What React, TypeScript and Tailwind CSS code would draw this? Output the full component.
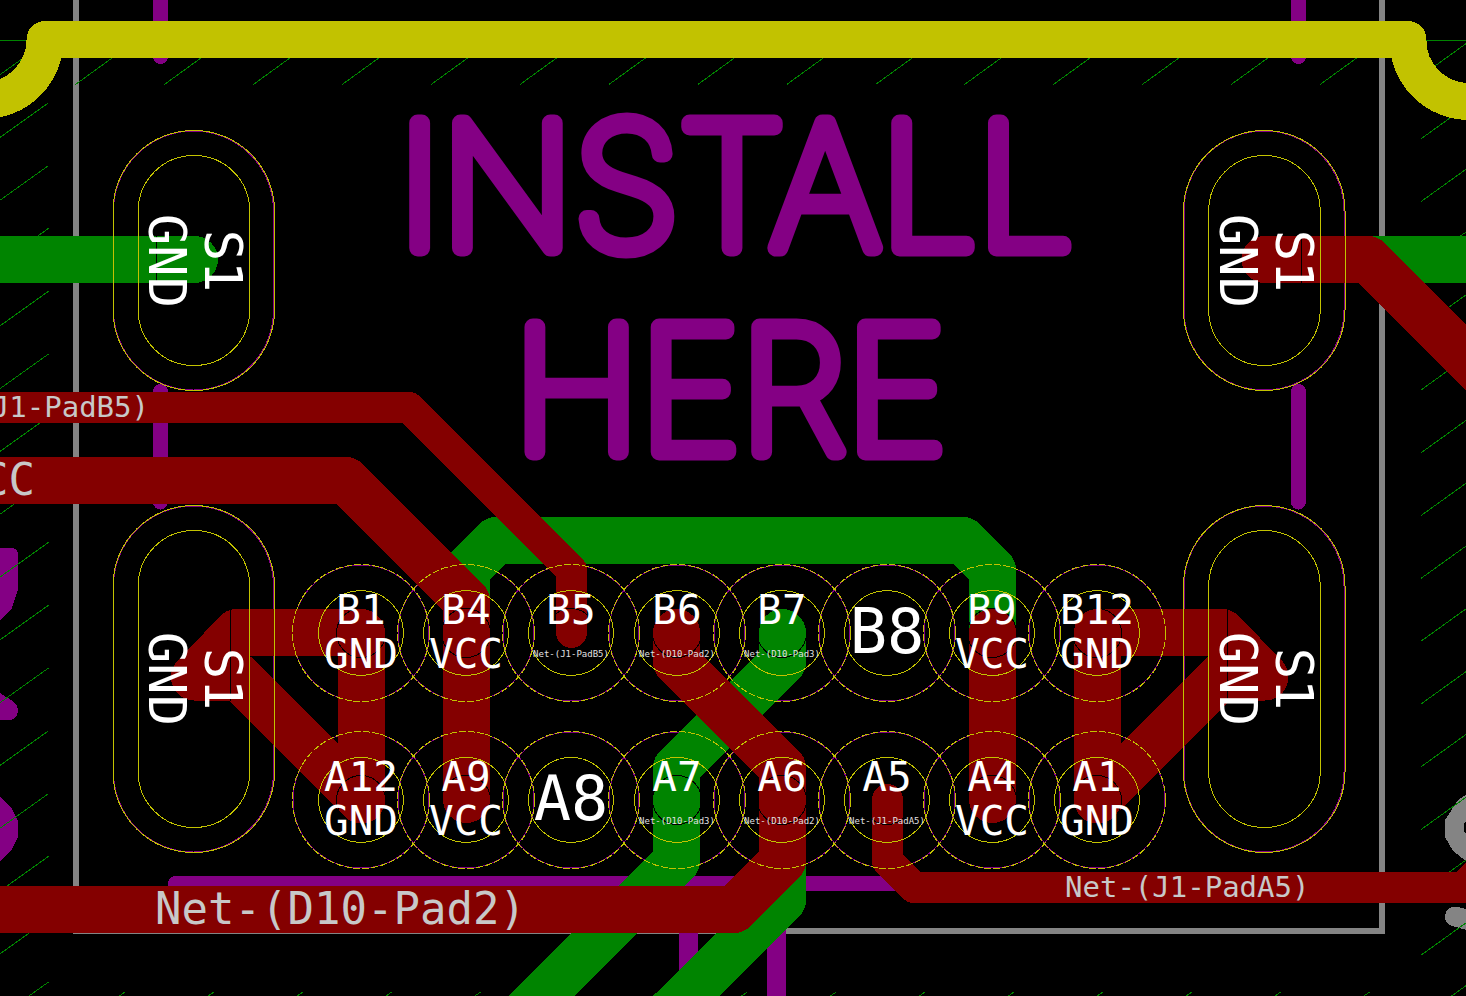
const RED = "#840000";
const GREEN = "#008400";
const PURPLE = "#840084";
const YELLOW = "#c2c200";
const GRAY = "#848484";

type Pad = { x: number; y: number; name: string; net?: string; small?: boolean };

const pads: Pad[] = [
  { x: 361, y: 633, name: "B1", net: "GND" },
  { x: 466, y: 633, name: "B4", net: "VCC" },
  { x: 571, y: 633, name: "B5", net: "Net-(J1-PadB5)", small: true },
  { x: 677, y: 633, name: "B6", net: "Net-(D10-Pad2)", small: true },
  { x: 782, y: 633, name: "B7", net: "Net-(D10-Pad3)", small: true },
  { x: 887, y: 633, name: "B8" },
  { x: 992, y: 633, name: "B9", net: "VCC" },
  { x: 1097, y: 633, name: "B12", net: "GND" },
  { x: 361, y: 800, name: "A12", net: "GND" },
  { x: 466, y: 800, name: "A9", net: "VCC" },
  { x: 571, y: 800, name: "A8" },
  { x: 677, y: 800, name: "A7", net: "Net-(D10-Pad3)", small: true },
  { x: 782, y: 800, name: "A6", net: "Net-(D10-Pad2)", small: true },
  { x: 887, y: 800, name: "A5", net: "Net-(J1-PadA5)", small: true },
  { x: 992, y: 800, name: "A4", net: "VCC" },
  { x: 1097, y: 800, name: "A1", net: "GND" },
];

const slots = [
  { x: 113, y: 130.5, h: 260, mid: 261 },
  { x: 1183.5, y: 130.5, h: 260, mid: 261 },
  { x: 113, y: 505.5, h: 347, mid: 679 },
  { x: 1183.5, y: 505.5, h: 347, mid: 679 },
];

const range = (n: number) => Array.from({ length: n }, (_, i) => i);

const hatch = [
  ...range(16).map((i) => `M48.5 ${40 + i * 62.8}l-49 35`),
  ...range(16).map((i) => `M1421 ${76 + i * 62.8}l48 -34.5`),
  ...range(15).map((i) => `M${75.5 + i * 88.9} 84.5l40 -29`),
  ...range(15).map((i) => `M${125 + i * 88.9} 992l-10 7`),
  "M0 40.5H40",
  "M1420 40.5H1466",
].join("");

const MONO = "font-['DejaVu_Sans_Mono',monospace]";

function Slot({ x, y, h, mid }: (typeof slots)[number]) {
  return (
    <g fill="none" stroke={YELLOW}>
      <rect x={x} y={y} width={161.5} height={h} rx={80.5} />
      <rect x={x + 25.2} y={y + 25} width={111.500} height={h - 50} rx={55.5} />
      <g fill="#fff" stroke="none" textAnchor="middle" className={`${MONO} text-[52px]`}>
        <text transform={`translate(${x + 36} ${mid}) rotate(90)`}>GND</text>
        <text transform={`translate(${x + 92} ${mid}) rotate(90)`}>S1</text>
      </g>
    </g>
  );
}

function PadMark({ x, y, name, net, small }: Pad) {
  return (
    <g>
      <g fill="none" shapeRendering="crispEdges">
        <circle cx={x} cy={y} r={24.5} stroke="#000" />
        <circle cx={x} cy={y} r={42.5} stroke={YELLOW} />
        <circle cx={x} cy={y} r={68.5} stroke={YELLOW} strokeDasharray="7 2" />
      </g>
      <g fill="#fff" textAnchor="middle" className={MONO}>
        {net ? (
          <>
            <text x={x} y={y - 9} className="text-[41px]">{name}</text>
            {small ? (
              <text x={x} y={y + 24} fill="#e0e0e0" className="text-[9px]">{net}</text>
            ) : (
              <text x={x} y={y + 35} className="text-[41px]">{net}</text>
            )}
          </>
        ) : (
          <text x={x} y={y + 20} className="text-[62px]">{name}</text>
        )}
      </g>
    </g>
  );
}

export default function App() {
  return (
    <main className="min-h-screen bg-black">
      <svg viewBox="0 0 1466 996" className="block h-auto w-full" role="img" aria-label="Circuit board layout">
        <g shapeRendering="crispEdges" fill="none">
          <path d="M76 0V931H1382V0" stroke={GRAY} strokeWidth={6} />
          <g fill={GRAY}>
            <path d="M1470 792L1458 800L1445 820V837L1453 851L1466 861H1470Z" />
            <path d="M1466 821L1464 823V831L1466 834Z" fill="#000" />
            <path d="M1455 916.500L1480 923" stroke={GRAY} strokeWidth={20} strokeLinecap="round" />
          </g>

          <g stroke={PURPLE} strokeWidth={15} strokeLinecap="round">
            <path d="M160.500 -10V56.500M160.500 391.500V502M1298.500 -10V56.500M1298.500 391.500V502M175.500 883.500H1290" />
            <path d="M688.500 926V1000M776.500 926V1000" strokeWidth={19} strokeLinecap="butt" />
          </g>
          <g fill={PURPLE}>
            <path d="M0 548H12Q18 549 18 555V590L11 610L0 620Z" />
            <path d="M0 693L14 702Q18 706 18 711Q17 719 10 720H0Z" />
            <path d="M0 797L11 807L18 821V837L11 851L0 861Z" />
          </g>

          <g stroke={PURPLE}>
            {pads.map((p) => (
              <circle key={p.name} cx={p.x} cy={p.y} r={68} />
            ))}
            {slots.map((s) => (
              <rect key={`${s.x}-${s.y}`} x={s.x + 0.5} y={s.y + 0.5} width={160} height={s.h - 1} rx={80} />
            ))}
          </g>

          <path d={hatch} stroke={GREEN} />

          <g stroke={GREEN} strokeWidth={47} strokeLinecap="round" strokeLinejoin="round">
            <path d="M-30 259.500H194.500M1265 259.500H1500" />
            <path d="M466.500 632V570L496 540.500H963L992.500 570V632" />
            <path d="M782.500 632.500V662L676.500 768V861L517 1020.500" />
            <path d="M782.500 800V900L662 1020.500" />
          </g>
          <g stroke={RED} strokeWidth={47} strokeLinecap="round" strokeLinejoin="round">
            <path d="M1265 259.500H1368L1500 391.500" />
            <path d="M-30 480.500H346L466.500 601V799.500" />
            <path d="M992.500 632.500V799.500" />
            <path d="M1097.500 799.500V632.500H1222L1265 677H1220.500L1097.500 800" />
            <path d="M361.500 799.500V632.500H237L194.500 677H238.500L361.500 800" />
            <path d="M676.500 632.500V662L782.500 768V861L734 909.500H-30" />
          </g>
          <g stroke={RED} strokeWidth={31} strokeLinecap="round" strokeLinejoin="round">
            <path d="M-20 407.500H409L571.500 570V632.500" />
            <path d="M887.500 799.500V861L914 887.500H1500M1463 887.500L1500 850.500" />
          </g>
          <path d="M156.500 236V283M1301.500 236V283M230.500 609V701M1227.500 609V701" stroke="#000" />

          <path
            d="M-15.500 100.500A61 61 0 0 0 45 39.500H1408A61 61 0 0 0 1468.500 101.500"
            stroke={YELLOW}
            strokeWidth={37}
            strokeLinejoin="round"
          />
        </g>

        <g
          fill={PURPLE}
          stroke={PURPLE}
          strokeWidth={17}
          strokeLinejoin="round"
          textAnchor="middle"
          className="font-['Inter',sans-serif] text-[172px] font-thin"
        >
          <text x={736} y={248}>INSTALL</text>
          <text x={730} y={452}>HERE</text>
        </g>

        <g shapeRendering="crispEdges">
          {slots.map((s) => (
            <Slot key={`${s.x}-${s.y}`} {...s} />
          ))}
        </g>
        {pads.map((p) => (
          <PadMark key={p.name} {...p} />
        ))}

        <g fill="#c8c8c8" className={MONO}>
          <text x={149} y={417} textAnchor="end" className="text-[29px]">Net-(J1-PadB5)</text>
          <text x={35} y={495} textAnchor="end" className="text-[44px]">VCC</text>
          <text x={155} y={924} className="text-[44px]">Net-(D10-Pad2)</text>
          <text x={1065} y={897} className="text-[29px]">Net-(J1-PadA5)</text>
        </g>
      </svg>
    </main>
  );
}
